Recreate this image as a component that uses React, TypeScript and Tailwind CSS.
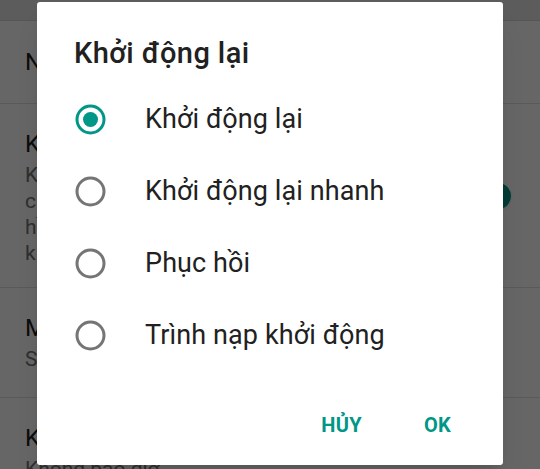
import React from "react";

const font = { fontFamily: "Roboto, 'Noto Sans', 'Liberation Sans', sans-serif" };

function Radio({ checked }: { checked: boolean }) {
  return (
    <svg width="31" height="31" viewBox="0 0 31 31" className="shrink-0">
      <circle
        cx="15.5"
        cy="15.5"
        r="13.5"
        fill="none"
        stroke={checked ? "#009688" : "#757575"}
        strokeWidth="3"
      />
      {checked && <circle cx="15.5" cy="15.5" r="7.5" fill="#009688" />}
    </svg>
  );
}

const options = [
  { label: "Khởi động lại", checked: true },
  { label: "Khởi động lại nhanh", checked: false },
  { label: "Phục hồi", checked: false },
  { label: "Trình nạp khởi động", checked: false },
];

export default function App() {
  return (
    <div
      className="relative w-[540px] h-[469px] overflow-hidden bg-white"
      style={font}
    >
      {/* Background settings list */}
      <div className="flex flex-col">
        <div className="h-[21px] bg-[#e6e6e6] border-b border-[#d4d4d4]" />
        <div className="h-[83px] border-b border-[#e0e0e0] pl-[25px] pt-[25px]">
          <div className="text-[24px] leading-[32px] text-[#212121] whitespace-nowrap">
            Nâng cao tùy chọn
          </div>
        </div>
        <div className="h-[184px] border-b border-[#e0e0e0] flex items-center">
          <div className="flex-1 pl-[25px] pt-[24px] self-start">
            <div className="text-[24px] leading-[32px] text-[#212121] whitespace-nowrap">
              Khởi động lại nâng cao
            </div>
            <div className="mt-[2px] text-[21px] leading-[26px] text-[#757575]">
              <div className="whitespace-nowrap">Khi được mở khóa, bao gồm tùy chọn</div>
              <div className="whitespace-nowrap">các menu nguồn để khởi động lại</div>
              <div className="whitespace-nowrap">hồi phục hoặc trình nạp</div>
              <div className="whitespace-nowrap">khởi động</div>
            </div>
          </div>
          <div className="relative w-[44px] h-[26px] mr-[29px] shrink-0">
            <div className="absolute left-[2px] right-[6px] top-[6px] h-[14px] rounded-full bg-[#80cbc4]" />
            <div className="absolute right-0 top-0 w-[26px] h-[26px] rounded-full bg-[#009688] shadow" />
          </div>
        </div>
        <div className="h-[110px] border-b border-[#e0e0e0] pl-[25px] pt-[24px]">
          <div className="text-[24px] leading-[32px] text-[#212121] whitespace-nowrap">
            Mặc định USB
          </div>
          <div className="mt-[2px] text-[21px] leading-[26px] text-[#757575] whitespace-nowrap">
            Sạc thiết bị này
          </div>
        </div>
        <div className="pl-[25px] pt-[24px]">
          <div className="text-[24px] leading-[32px] text-[#212121] whitespace-nowrap">
            Khóa màn hình
          </div>
          <div className="mt-[2px] text-[21px] leading-[26px] text-[#757575] whitespace-nowrap">
            Không bao giờ
          </div>
        </div>
      </div>

      {/* Scrim */}
      <div className="absolute inset-0 bg-black/60" />

      {/* Dialog */}
      <div className="absolute left-[37px] top-[2px] w-[466px] h-[463px] bg-white rounded-[3px] shadow-xl flex flex-col">
        <div className="pt-[33px] pl-[37px] text-[29px] leading-[36px] font-medium tracking-[0.4px] text-[#212121] whitespace-nowrap">
          Khởi động lại
        </div>
        <div className="mt-[12px] flex flex-col">
          {options.map((o) => (
            <div key={o.label} className="h-[72px] flex items-center pl-[38px]">
              <Radio checked={o.checked} />
              <span className="ml-[39px] text-[27px] leading-[34px] tracking-[0.1px] text-[#212121] whitespace-nowrap">
                {o.label}
              </span>
            </div>
          ))}
        </div>
        <div className="mt-[30px] flex justify-end pr-[36px] gap-[30px]">
          <div className="h-[48px] px-[16px] flex items-center text-[20px] font-bold tracking-[0.3px] text-[#009688]">
            HỦY
          </div>
          <div className="h-[48px] px-[16px] flex items-center text-[20px] font-bold tracking-[0.3px] text-[#009688]">
            OK
          </div>
        </div>
      </div>
    </div>
  );
}
